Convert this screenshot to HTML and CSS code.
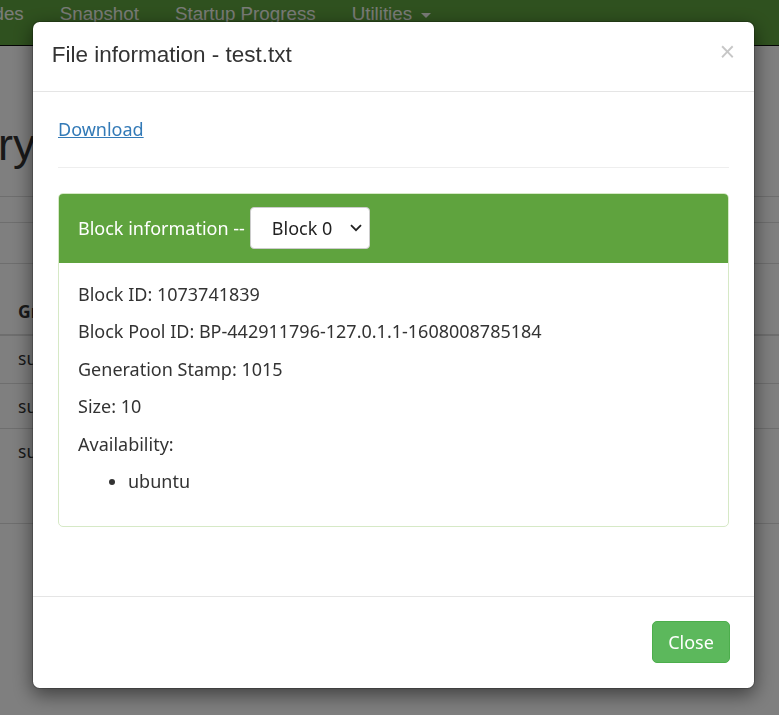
FILE: index.html
```html
<!DOCTYPE html>
<html lang="en">
<head>
<meta charset="utf-8">
<title>Browse Directory</title>
<link rel="stylesheet" href="styles.css">
</head>
<body>
<div class="page">
  <nav class="navbar">
    <ul class="nav">
      <li>Datanodes</li>
      <li>Snapshot</li>
      <li>Startup Progress</li>
      <li>Utilities <span class="caret"></span></li>
    </ul>
  </nav>
  <main class="container">
    <h1 class="page-title">Browse Directory</h1>
    <div class="toolbar toolbar-top"></div>
    <div class="toolbar toolbar-bottom"></div>
    <table class="listing">
      <thead>
        <tr><th>Group</th><th>Size</th><th>Last Modified</th></tr>
      </thead>
      <tbody>
        <tr class="row-a"><td>supergroup</td><td></td><td></td></tr>
        <tr class="row-b"><td>supergroup</td><td></td><td></td></tr>
        <tr class="row-c"><td>supergroup</td><td></td><td></td></tr>
      </tbody>
    </table>
  </main>
</div>

<div class="backdrop"></div>

<div class="modal" role="dialog">
  <div class="modal-content">
    <div class="modal-header">
      <h4 class="modal-title">File information - test.txt</h4>
      <button class="close" type="button">&times;</button>
    </div>
    <div class="modal-body">
      <a class="download" href="#">Download</a>
      <hr class="divider">
      <div class="panel">
        <div class="panel-heading">
          <span class="panel-title">Block information --</span>
          <span class="select-wrap">
            <select class="block-select">
              <option>Block 0</option>
            </select>
            <svg class="chevron" width="12" height="8" viewBox="0 0 12 8"><path d="M1 1.2 L6 6.2 L11 1.2" fill="none" stroke="#222" stroke-width="1.8"/></svg>
          </span>
        </div>
        <div class="panel-body">
          <p>Block ID: 1073741839</p>
          <p>Block Pool ID: BP-442911796-127.0.1.1-1608008785184</p>
          <p>Generation Stamp: 1015</p>
          <p>Size: 10</p>
          <p>Availability:</p>
          <ul class="hosts">
            <li>ubuntu</li>
          </ul>
        </div>
      </div>
    </div>
    <div class="modal-footer">
      <button class="btn-close" type="button">Close</button>
    </div>
  </div>
</div>
</body>
</html>
```

FILE: styles.css
```css
html, body {
  margin: 0;
  padding: 0;
}
body {
  width: 779px;
  height: 715px;
  overflow: hidden;
  background: #fff;
  color: #333;
  font-family: "Noto Sans", "Open Sans", sans-serif;
  font-size: 18px;
  line-height: 25px;
}

/* ---------- page behind the modal ---------- */
.page {
  width: 779px;
  overflow: hidden;
}
.navbar {
  height: 45px;
  background: #5fa33e;
  border-bottom: 1px solid #080808;
  overflow: hidden;
}
.nav {
  list-style: none;
  margin: 0 0 0 -67px;
  padding: 0;
  display: flex;
  gap: 36px;
  font-family: "Liberation Sans", Arial, sans-serif;
  font-size: 18.75px;
  line-height: 28px;
  color: #f4f8f0;
  white-space: nowrap;
}
.caret {
  display: inline-block;
  width: 0;
  height: 0;
  margin-left: 4px;
  vertical-align: middle;
  border-top: 5px solid #f4f8f0;
  border-left: 5px solid transparent;
  border-right: 5px solid transparent;
}
.container {
  padding: 0;
}
.page-title {
  margin: 74px 0 0 -307px;
  font-family: "Liberation Sans", Arial, sans-serif;
  font-size: 45px;
  line-height: 49.5px;
  font-weight: 500;
  color: #333;
  white-space: nowrap;
}
.toolbar-top {
  margin-top: 26px;
  height: 25px;
  border-top: 1px solid #ddd;
  border-bottom: 1px solid #ddd;
}
.toolbar-bottom {
  height: 40px;
  border-bottom: 1px solid #ddd;
}
.listing {
  width: 100%;
  border-collapse: collapse;
  font-size: 17.5px;
}
.listing th {
  height: 60px;
  padding: 0 18px 10px;
  vertical-align: bottom;
  text-align: left;
  font-weight: 700;
  border-bottom: 2px solid #ddd;
}
.listing td {
  padding: 10px 18px 0;
  vertical-align: top;
  border-bottom: 1px solid #ddd;
}
.row-a td { height: 37px; }
.row-b td { height: 34px; }
.row-c td { height: 84px; }

/* ---------- backdrop ---------- */
.backdrop {
  position: fixed;
  inset: 0;
  background: rgba(0, 0, 0, 0.5);
}

/* ---------- modal ---------- */
.modal {
  position: fixed;
  left: 32px;
  top: 21px;
  width: 723px;
}
.modal-content {
  background: #fff;
  border: 1px solid rgba(0, 0, 0, 0.2);
  border-radius: 7.5px;
  box-shadow: 0 6px 19px rgba(0, 0, 0, 0.5);
  background-clip: padding-box;
}
.modal-header {
  display: flex;
  justify-content: space-between;
  align-items: flex-start;
  padding: 16.75px 18.75px 20.25px;
  border-bottom: 1px solid #e5e5e5;
}
.modal-title {
  margin: 0;
  font-family: "Liberation Sans", Arial, sans-serif;
  font-size: 22.5px;
  line-height: 32px;
  font-weight: 500;
  color: #333;
}
.close {
  margin: 0;
  padding: 0;
  border: 0;
  background: transparent;
  font-family: "Liberation Sans", Arial, sans-serif;
  font-size: 27px;
  font-weight: 400;
  line-height: 1;
  color: #000;
  opacity: 0.22;
}
.modal-body {
  padding: 25px 25px 69px;
}
.download {
  display: block;
  width: max-content;
  color: #337ab7;
  text-decoration: underline;
}
.divider {
  margin: 25px 0;
  border: 0;
  border-top: 1px solid #eee;
}
.panel {
  border: 1px solid #d6e9c6;
  border-radius: 5px;
}
.panel-heading {
  display: flex;
  align-items: center;
  gap: 5px;
  padding: 13px 19px 14px;
  background: #5fa33e;
  color: #fff;
  border-top-left-radius: 4px;
  border-top-right-radius: 4px;
}
.select-wrap {
  position: relative;
  display: inline-flex;
}
.block-select {
  appearance: none;
  -webkit-appearance: none;
  width: 120px;
  height: 42px;
  padding: 0 0 0 21px;
  border: 1px solid #ccc;
  border-radius: 4px;
  background: #fff;
  color: #222;
  font-family: "Noto Sans", "Open Sans", sans-serif;
  font-size: 18px;
}
.chevron {
  position: absolute;
  right: 8px;
  top: 17px;
  pointer-events: none;
}
.panel-body {
  padding: 18.75px 19px;
}
.panel-body p {
  margin: 0 0 12.5px;
}
.hosts {
  margin: 0 0 12.5px;
  padding-left: 50px;
}
.modal-footer {
  display: flex;
  justify-content: flex-end;
  padding: 24px 24px 25px;
  border-top: 1px solid #e5e5e5;
}
.btn-close {
  width: 78px;
  height: 42px;
  padding: 0;
  border: 1px solid #4cae4c;
  border-radius: 5px;
  background: #5cb85c;
  color: #fff;
  font-family: "Noto Sans", "Open Sans", sans-serif;
  font-size: 18px;
}
```
